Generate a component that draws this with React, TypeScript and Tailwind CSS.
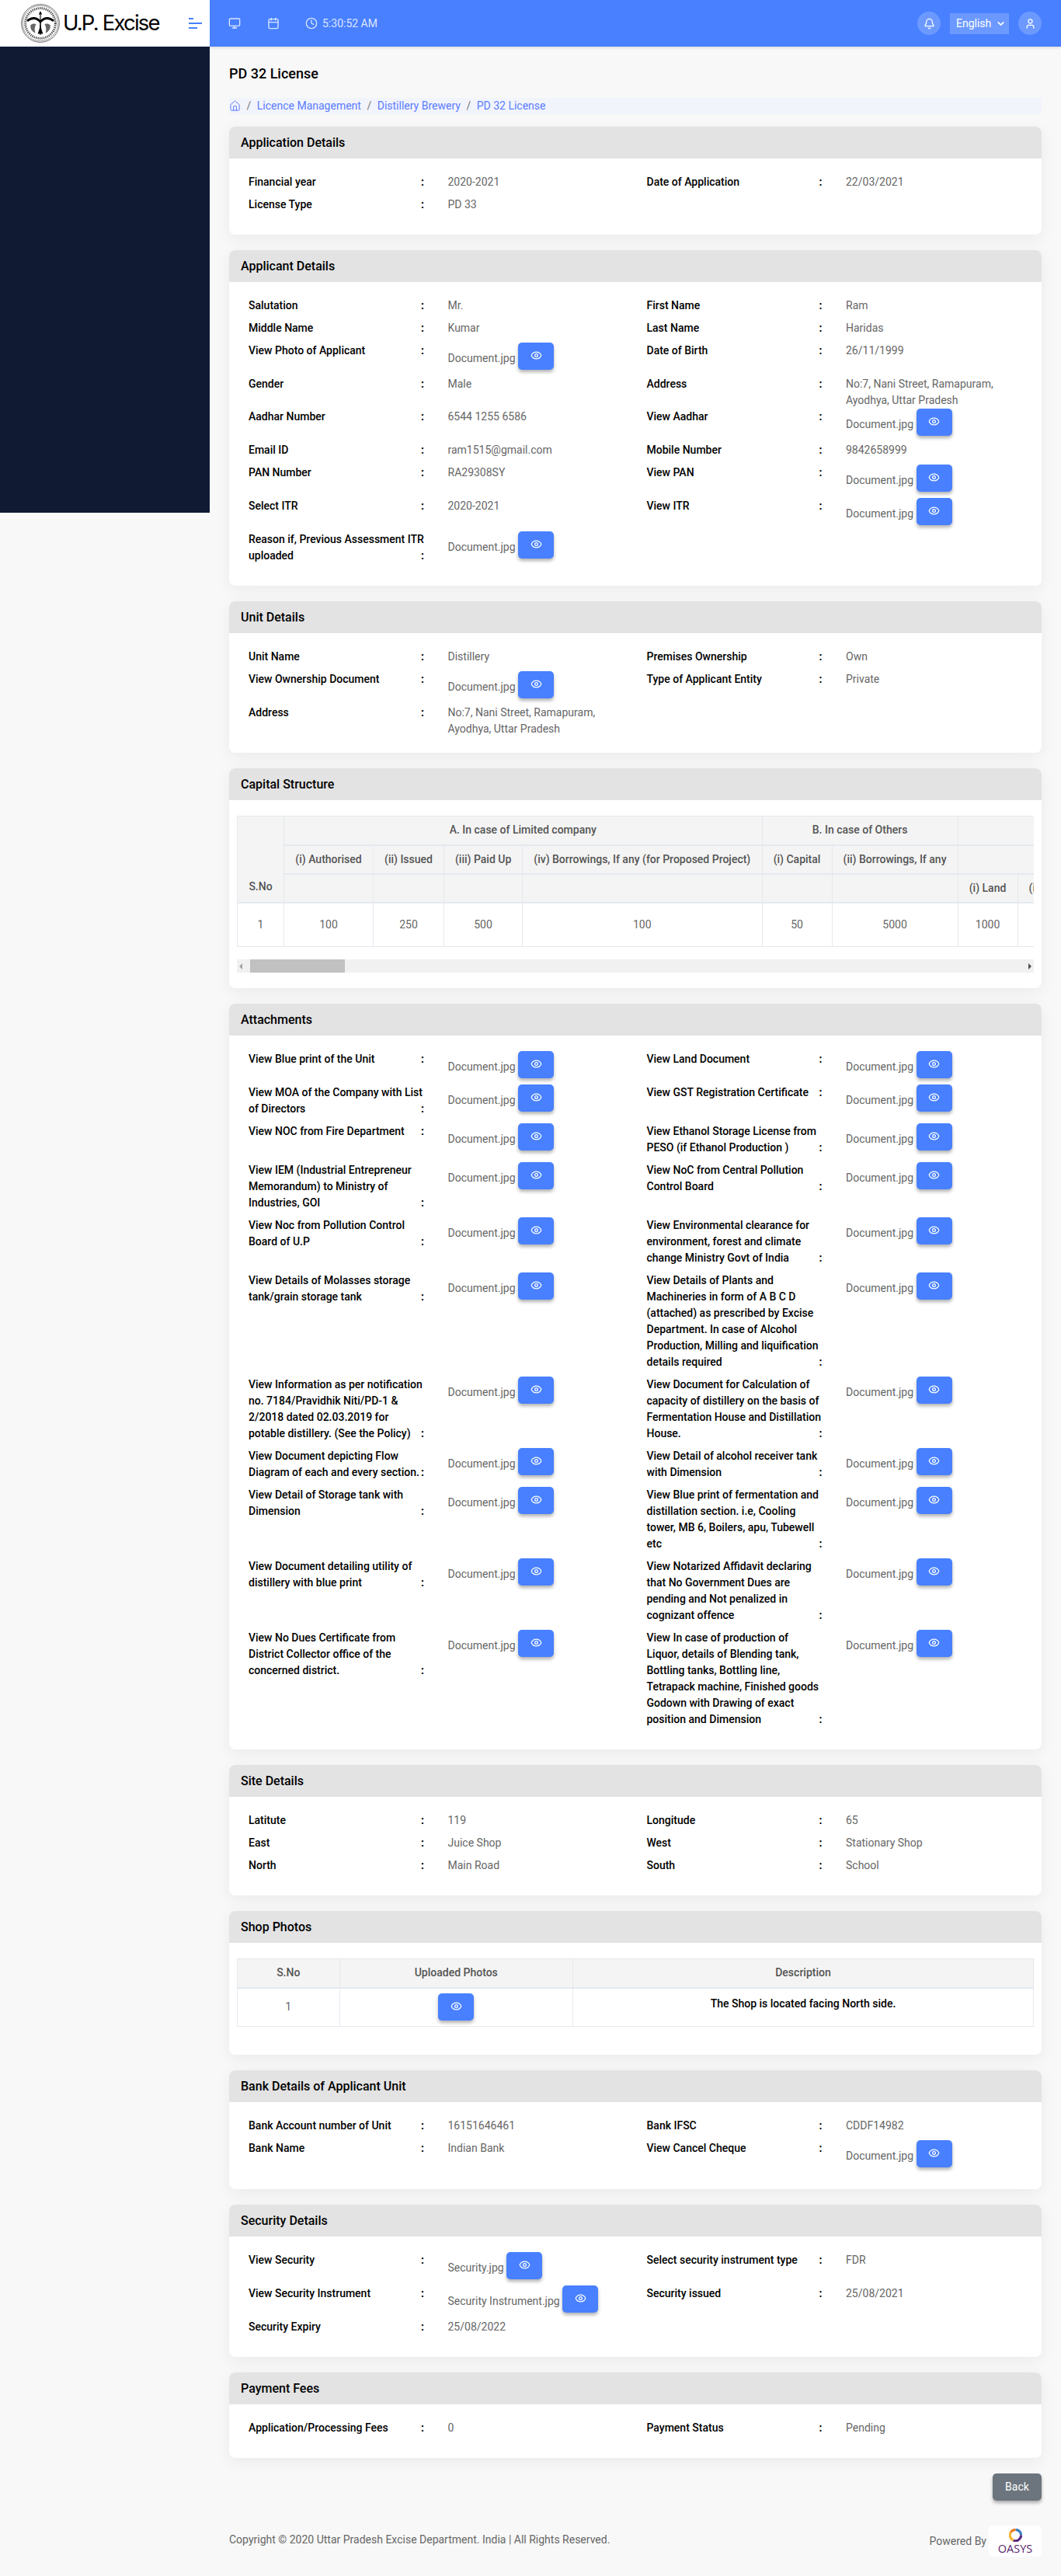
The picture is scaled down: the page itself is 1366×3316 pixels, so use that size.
import React from "react";
import { Bell, Calendar, ChevronDown, Clock, Eye, House, Monitor, User } from "lucide-react";

interface Field {
  label: string;
  value?: string;
  doc?: string;
}

const doc = (label: string, file = "Document.jpg"): Field => ({ label, doc: file });

const applicationFields: Field[] = [
  { label: "Financial year", value: "2020-2021" },
  { label: "Date of Application", value: "22/03/2021" },
  { label: "License Type", value: "PD 33" },
];

const applicantFields: Field[] = [
  { label: "Salutation", value: "Mr." },
  { label: "First Name", value: "Ram" },
  { label: "Middle Name", value: "Kumar" },
  { label: "Last Name", value: "Haridas" },
  doc("View Photo of Applicant"),
  { label: "Date of Birth", value: "26/11/1999" },
  { label: "Gender", value: "Male" },
  { label: "Address", value: "No:7, Nani Street, Ramapuram, Ayodhya, Uttar Pradesh" },
  { label: "Aadhar Number", value: "6544 1255 6586" },
  doc("View Aadhar"),
  { label: "Email ID", value: "ram1515@gmail.com" },
  { label: "Mobile Number", value: "9842658999" },
  { label: "PAN Number", value: "RA29308SY" },
  doc("View PAN"),
  { label: "Select ITR", value: "2020-2021" },
  doc("View ITR"),
  doc("Reason if, Previous Assessment ITR uploaded"),
];

const unitFields: Field[] = [
  { label: "Unit Name", value: "Distillery" },
  { label: "Premises Ownership", value: "Own" },
  doc("View Ownership Document"),
  { label: "Type of Applicant Entity", value: "Private" },
  { label: "Address", value: "No:7, Nani Street, Ramapuram, Ayodhya, Uttar Pradesh" },
];

const attachmentFields: Field[] = [
  doc("View Blue print of the Unit"),
  doc("View Land Document"),
  doc("View MOA of the Company with List of Directors"),
  doc("View GST Registration Certificate"),
  doc("View NOC from Fire Department"),
  doc("View Ethanol Storage License from PESO (if Ethanol Production )"),
  doc("View IEM (Industrial Entrepreneur Memorandum) to Ministry of Industries, GOI"),
  doc("View NoC from Central Pollution Control Board"),
  doc("View Noc from Pollution Control Board of U.P"),
  doc("View Environmental clearance for environment, forest and climate change Ministry Govt of India"),
  doc("View Details of Molasses storage tank/grain storage tank"),
  doc("View Details of Plants and Machineries in form of A B C D (attached) as prescribed by Excise Department. In case of Alcohol Production, Milling and liquification details required"),
  doc("View Information as per notification no. 7184/Pravidhik Niti/PD-1 & 2/2018 dated 02.03.2019 for potable distillery. (See the Policy)"),
  doc("View Document for Calculation of capacity of distillery on the basis of Fermentation House and Distillation House."),
  doc("View Document depicting Flow Diagram of each and every section."),
  doc("View Detail of alcohol receiver tank with Dimension"),
  doc("View Detail of Storage tank with Dimension"),
  doc("View Blue print of fermentation and distillation section. i.e, Cooling tower, MB 6, Boilers, apu, Tubewell etc"),
  doc("View Document detailing utility of distillery with blue print"),
  doc("View Notarized Affidavit declaring that No Government Dues are pending and Not penalized in cognizant offence"),
  doc("View No Dues Certificate from District Collector office of the concerned district."),
  doc("View In case of production of Liquor, details of Blending tank, Bottling tanks, Bottling line, Tetrapack machine, Finished goods Godown with Drawing of exact position and Dimension"),
];

const siteFields: Field[] = [
  { label: "Latitute", value: "119" },
  { label: "Longitude", value: "65" },
  { label: "East", value: "Juice Shop" },
  { label: "West", value: "Stationary Shop" },
  { label: "North", value: "Main Road" },
  { label: "South", value: "School" },
];

const bankFields: Field[] = [
  { label: "Bank Account number of Unit", value: "16151646461" },
  { label: "Bank IFSC", value: "CDDF14982" },
  { label: "Bank Name", value: "Indian Bank" },
  doc("View Cancel Cheque"),
];

const securityFields: Field[] = [
  doc("View Security", "Security.jpg"),
  { label: "Select security instrument type", value: "FDR" },
  doc("View Security Instrument", "Security Instrument.jpg"),
  { label: "Security issued", value: "25/08/2021" },
  { label: "Security Expiry", value: "25/08/2022" },
];

const paymentFields: Field[] = [
  { label: "Application/Processing Fees", value: "0" },
  { label: "Payment Status", value: "Pending" },
];

const ViewButton = () => (
  <button className="flex h-[35px] w-[46px] shrink-0 items-center justify-center rounded-[5px] bg-[#4880ff] pb-[3px] text-white shadow-[0_3px_4px_rgba(0,0,0,0.3)]">
    <Eye size={15} strokeWidth={2} />
  </button>
);

const FieldCell = ({ label, value, doc: file }: Field) => (
  <div className="flex items-start">
    <div className="relative mb-2 w-[226px] shrink-0 text-[14px] leading-[21px] font-medium text-black">
      {label}
      <span className="absolute right-0 bottom-0 font-bold">:</span>
    </div>
    <div className="ml-[30.5px] w-[205px] text-[14px] leading-[21px] font-normal text-[#666]">
      {file ? (
        <div className="mb-2 flex items-start gap-[3.5px] whitespace-nowrap">
          <span className="mt-[10px]">{file}</span>
          <ViewButton />
        </div>
      ) : (
        value
      )}
    </div>
  </div>
);

const Card = ({ title, children }: { title: string; children: React.ReactNode }) => (
  <section className="rounded-lg bg-white shadow-[0_5px_20px_rgba(0,0,0,0.06)]">
    <h2 className="flex h-[41px] items-center rounded-t-lg bg-[#e3e3e3] px-[15px] text-[16px] font-medium text-black">
      {title}
    </h2>
    {children}
  </section>
);

const FieldCard = ({ title, fields }: { title: string; fields: Field[] }) => (
  <Card title={title}>
    <div className="grid grid-cols-[512.5px_1fr] px-[25px] py-5">
      {fields.map((f, i) => (
        <FieldCell key={i} {...f} />
      ))}
    </div>
  </Card>
);

const th = "border border-[#e4e9ef] bg-[#f4f4f4] px-[14px] text-center text-[14px] font-medium whitespace-nowrap text-[#555]";
const td = "border border-[#e4e9ef] px-[14px] text-center text-[14px] font-normal text-[#666]";

const CapitalTable = () => (
  <div className="overflow-hidden">
    <table className="w-[1240px] table-fixed border-collapse">
      <colgroup>
        <col className="w-[60px]" />
        <col className="w-[115px]" />
        <col className="w-[91px]" />
        <col className="w-[101px]" />
        <col className="w-[308.5px]" />
        <col className="w-[90px]" />
        <col className="w-[162px]" />
        <col className="w-[77px]" />
        <col className="w-[235.5px]" />
      </colgroup>
      <thead>
        <tr className="h-[37px] border-b-2 border-[#e4e9ef]">
          <th rowSpan={3} className={`${th} align-bottom pb-[9px]`}>S.No</th>
          <th colSpan={4} className={th}>A. In case of Limited company</th>
          <th colSpan={2} className={th}>B. In case of Others</th>
          <th colSpan={2} className={th}></th>
        </tr>
        <tr className="h-[37px] border-b-2 border-[#e4e9ef]">
          <th className={th}>(i) Authorised</th>
          <th className={th}>(ii) Issued</th>
          <th className={th}>(iii) Paid Up</th>
          <th className={th}>(iv) Borrowings, If any (for Proposed Project)</th>
          <th className={th}>(i) Capital</th>
          <th className={th}>(ii) Borrowings, If any</th>
          <th colSpan={2} className={th}></th>
        </tr>
        <tr className="h-[37px] border-b-2 border-[#e4e9ef]">
          <th className={th}></th>
          <th className={th}></th>
          <th className={th}></th>
          <th className={th}></th>
          <th className={th}></th>
          <th className={th}></th>
          <th className={th}>(i) Land</th>
          <th className={`${th} text-left`}>(ii) Building</th>
        </tr>
      </thead>
      <tbody>
        <tr className="h-[57px]">
          {["1", "100", "250", "500", "100", "50", "5000", "1000"].map((v, i) => (
            <td key={i} className={td}>{v}</td>
          ))}
          <td className={td}></td>
        </tr>
      </tbody>
    </table>
  </div>
);

const FakeScrollbar = () => (
  <div className="mt-4 flex h-[17px] items-center justify-between bg-[#f1f1f1] px-[3px]">
    <span className="h-0 w-0 border-y-[4px] border-r-[4px] border-y-transparent border-r-[#a3a3a3]" />
    <span className="mr-auto ml-[10px] h-[17px] w-[122px] bg-[#c1c1c1]" />
    <span className="h-0 w-0 border-y-[4px] border-l-[4px] border-y-transparent border-l-[#505050]" />
  </div>
);

const Emblem = () => (
  <svg width="50" height="50" viewBox="0 0 50 50" fill="none">
    <circle cx="25" cy="25" r="24.4" stroke="#333" strokeWidth="0.7" />
    <circle cx="25" cy="25" r="22.8" stroke="#333" strokeWidth="0.5" />
    <circle cx="25" cy="25" r="19.4" stroke="#555" strokeWidth="3" strokeDasharray="1.4 1.1" />
    <path d="M8 22C14 17 20 17.5 25 23C30 17.5 36 17 42 22" stroke="#000" strokeWidth="2.8" />
    <path d="M25 10V40" stroke="#000" strokeWidth="1.1" />
    <path d="M22.8 13.5L25 9.5L27.2 13.5Z" fill="#000" />
    <path d="M24.6 23C24.6 29 24 33 21.5 38.5H28.5C26 33 25.4 29 25.4 23Z" fill="#000" />
    <path d="M12.5 27C11.5 31 13.5 35.5 18.5 37.5C17 33.5 17.5 29.5 19.5 26C17 25 14.5 25.5 12.5 27Z" fill="#666" />
    <path d="M37.5 27C38.5 31 36.5 35.5 31.5 37.5C33 33.5 32.5 29.5 30.5 26C33 25 35.5 25.5 37.5 27Z" fill="#666" />
  </svg>
);

const OasysLogo = () => (
  <div className="flex h-10 w-[68px] flex-col items-center rounded-[5px] bg-white pt-[4px]">
    <svg width="17" height="17" viewBox="0 0 18 18" fill="none">
      <path d="M9 1.5A7.5 7.5 0 0 1 16.5 9" stroke="#3f7fc4" strokeWidth="3.4" />
      <path d="M16.5 9A7.5 7.5 0 0 1 6 16" stroke="#5c2a7e" strokeWidth="3.4" />
      <path d="M6 16A7.5 7.5 0 0 1 2.5 5" stroke="#f2b632" strokeWidth="3.4" />
      <path d="M2.5 5A7.5 7.5 0 0 1 9 1.5" stroke="#ee7d22" strokeWidth="3.4" />
    </svg>
    <span className="mt-[1px] font-[family-name:Open_Sans,sans-serif] text-[14.5px] leading-[15px] text-[#5b1f6e]">OASYS</span>
  </div>
);

export default function App() {
  return (
    <div className="min-h-[3316px] bg-[#f8f8f8] font-[family-name:Roboto,sans-serif]">
      <header className="flex h-[60px] bg-[#4880ff] shadow-[0_1px_4px_rgba(0,0,0,0.15)]">
        <div className="flex w-[270px] items-center bg-white pl-[27px]">
          <Emblem />
          <span className="ml-[4px] w-[127px] font-[family-name:Inter,sans-serif] text-[27.5px] font-normal tracking-[-1.8px] whitespace-nowrap text-black">
            U.P. Excise
          </span>
          <div className="ml-[35px] flex w-[17px] flex-col gap-[4px]">
            <span className="h-[2px] w-[6px] bg-[#4880ff]" />
            <span className="h-[2px] w-[17px] bg-[#4880ff]" />
            <span className="h-[2px] w-[11px] bg-[#4880ff]" />
          </div>
        </div>
        <div className="flex flex-1 items-center pr-[25px] pl-[24px] text-white">
          <Monitor size={16} className="opacity-80" />
          <Calendar size={16} className="ml-[34px] opacity-80" />
          <Clock size={16} className="ml-[33px] opacity-80" />
          <span className="ml-[6px] text-[14px] opacity-80">5:30:52 AM</span>
          <div className="ml-auto flex size-[30px] items-center justify-center rounded-full bg-white/20">
            <Bell size={15} />
          </div>
          <div className="ml-3 flex h-[27px] w-[76px] items-center justify-between bg-white/20 pr-1 pl-2 text-[14px]">
            English
            <ChevronDown size={13} strokeWidth={3} />
          </div>
          <div className="ml-3 flex size-[30px] items-center justify-center rounded-full bg-white/20">
            <User size={15} />
          </div>
        </div>
      </header>
      <div className="flex items-start">
        <aside className="h-[600px] w-[270px] shrink-0 bg-[#101b33]" />
        <main className="min-w-0 flex-1 pt-6 pr-[25px] pl-[25px]">
          <h1 className="text-[18px] leading-[21px] font-medium text-black">PD 32 License</h1>
          <nav className="mt-[21px] flex h-[21px] items-center bg-[#f2f4fb] text-[14px] text-[#5b7cff]">
            <House size={15} strokeWidth={1.6} />
            <span className="mx-[7.5px] text-[#777]">/</span>
            <span>Licence Management</span>
            <span className="mx-[7.5px] text-[#777]">/</span>
            <span>Distillery Brewery</span>
            <span className="mx-[7.5px] text-[#777]">/</span>
            <span>PD 32 License</span>
          </nav>
          <div className="mt-4 flex flex-col gap-5">
            <FieldCard title="Application Details" fields={applicationFields} />
            <FieldCard title="Applicant Details" fields={applicantFields} />
            <FieldCard title="Unit Details" fields={unitFields} />
            <Card title="Capital Structure">
              <div className="px-[10px] pt-5 pb-5">
                <CapitalTable />
                <FakeScrollbar />
              </div>
            </Card>
            <FieldCard title="Attachments" fields={attachmentFields} />
            <FieldCard title="Site Details" fields={siteFields} />
            <Card title="Shop Photos">
              <div className="px-[10px] pt-5 pb-9">
                <table className="w-full table-fixed border-collapse">
                  <colgroup>
                    <col className="w-[131.5px]" />
                    <col className="w-[300.5px]" />
                    <col />
                  </colgroup>
                  <thead>
                    <tr className="h-[37px] border-b-2 border-[#e4e9ef]">
                      <th className={th}>S.No</th>
                      <th className={th}>Uploaded Photos</th>
                      <th className={th}>Description</th>
                    </tr>
                  </thead>
                  <tbody>
                    <tr className="h-[50px]">
                      <td className={td}>1</td>
                      <td className={td}>
                        <div className="flex justify-center">
                          <ViewButton />
                        </div>
                      </td>
                      <td className="border border-[#e4e9ef] pb-[8px] text-center text-[14px] font-medium text-black">
                        The Shop is located facing North side.
                      </td>
                    </tr>
                  </tbody>
                </table>
              </div>
            </Card>
            <FieldCard title="Bank Details of Applicant Unit" fields={bankFields} />
            <FieldCard title="Security Details" fields={securityFields} />
            <FieldCard title="Payment Fees" fields={paymentFields} />
          </div>
          <div className="mt-5 flex justify-end">
            <button className="h-[35px] w-[63px] rounded-[5px] bg-[#6c757d] text-[14px] text-white shadow-[0_3px_4px_rgba(0,0,0,0.3)]">
              Back
            </button>
          </div>
          <footer className="mt-8 flex items-center justify-between text-[14px] font-normal text-[#666]">
            <span className="-mt-[3px]">Copyright © 2020 Uttar Pradesh Excise Department. India | All Rights Reserved.</span>
            <div className="flex items-center gap-[3px]">
              <span>Powered By</span>
              <OasysLogo />
            </div>
          </footer>
        </main>
      </div>
    </div>
  );
}
